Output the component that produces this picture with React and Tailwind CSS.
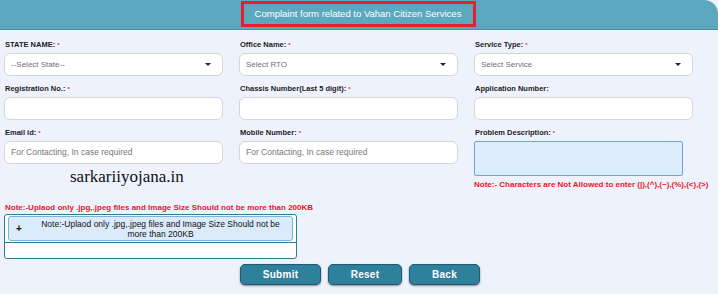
import React from 'react';

const Req = () => <span className="text-[#f0302e] text-[6px] align-top ml-[2px]">*</span>;

const Label = ({ children, req }) => (
  <div className="h-[12px] leading-[12px] text-[7.5px] font-bold text-[#1c1c1c] pl-[1px] mb-[2px]">
    {children}
    {req && <Req />}
  </div>
);

const Select = ({ text }) => (
  <div className="h-[23px] bg-white border border-[#d6d6d6] rounded-[6px] flex items-center justify-between px-[6px]">
    <span className="text-[8px] text-[#6f6f6f]">{text}</span>
    <span className="w-0 h-0 border-l-[3px] border-r-[3px] border-t-[3px] border-l-transparent border-r-transparent border-t-[#222] mr-[5px]" />
  </div>
);

const Input = ({ placeholder }) => (
  <div className="h-[23px] bg-white border border-[#d6d6d6] rounded-[6px] flex items-center px-[6px]">
    <span className="text-[8.5px] text-[#777]">{placeholder}</span>
  </div>
);

const Button = ({ children, w }) => (
  <button className={`${w} h-[21px] rounded-[5px] bg-[#2f809b] border border-[#1d5c70] shadow-[0_1px_2px_rgba(0,0,0,0.45)] text-white text-[10px] font-bold tracking-[0.3px]`}>
    {children}
  </button>
);

export default function App() {
  return (
    <div className="w-[718px] h-[294px] bg-[#eef2fd] overflow-hidden" style={{ fontFamily: '"Liberation Sans", Arial, sans-serif' }}>
      {/* header */}
      <div className="h-[30px] bg-[#5ba7bd] rounded-tr-[14px] border-b border-[#4c90a5] flex justify-center items-start pt-[1px]">
        <div className="ml-[-2px] w-[235px] h-[26px] border-[3px] border-[#e5202b] flex items-center justify-center text-white text-[9.5px]">
          Complaint form related to Vahan Citizen Services
        </div>
      </div>

      <div className="relative px-[4px] pt-[9px]">
        <div className="grid grid-cols-[219px_219px_219px] gap-x-[16px] gap-y-[7px]">
          <div>
            <Label req>STATE NAME:</Label>
            <Select text="--Select State--" />
          </div>
          <div>
            <Label req>Office Name:</Label>
            <Select text="Select RTO" />
          </div>
          <div>
            <Label req>Service Type:</Label>
            <Select text="Select Service" />
          </div>

          <div>
            <Label req>Registration No.:</Label>
            <Input />
          </div>
          <div>
            <Label req>Chassis Number(Last 5 digit):</Label>
            <Input />
          </div>
          <div>
            <Label>Application Number:</Label>
            <Input />
          </div>

          <div>
            <Label req>Email id:</Label>
            <Input placeholder="For Contacting, In case required" />
          </div>
          <div>
            <Label req>Mobile Number:</Label>
            <Input placeholder="For Contacting, In case required" />
          </div>
          <div>
            <Label req>Problem Description:</Label>
            <div className="w-[209px] h-[35px] bg-[#deedfb] border border-[#6ea6d6] rounded-[2px]" />
            <div className="mt-[3px] h-[12px] leading-[12px] text-[8px] font-bold text-[#f0141e] whitespace-nowrap">
              Note:- Characters are Not Allowed to enter (|),(^),(~),(%),(&lt;),(&gt;)
            </div>
          </div>
        </div>

        {/* watermark */}
        <div className="absolute left-[70px] top-[137px] text-[17px] leading-[20px] text-[#111]" style={{ fontFamily: '"Liberation Serif", "Times New Roman", serif' }}>
          sarkariiyojana.in
        </div>

        <div className="mt-[12px] h-[10px] leading-[10px] text-[8px] font-bold text-[#f0141e] pl-[1px] whitespace-nowrap">
          Note:-Uplaod only .jpg,.jpeg files and Image Size Should not be more than 200KB
        </div>

        {/* upload */}
        <div className="mt-[1px] w-[293px] h-[45px] bg-white border border-[#2a7a98] rounded-[3px] flex flex-col">
          <div className="mx-[3px] mt-[1px] h-[25px] bg-[#dcebf9] border border-[#7eb1da] rounded-[3px] flex items-center">
            <span className="w-[20px] text-center text-[10px] font-bold text-[#111]">+</span>
            <span className="flex-1 text-center text-[8.5px] leading-[10px] text-[#111] px-[10px]">
              Note:-Uplaod only .jpg,.jpeg files and Image Size Should not be more than 200KB
            </span>
          </div>
          <div className="mt-[1px] border-t border-[#2a7a98]" />
        </div>

        <div className="mt-[5px] flex justify-center gap-[7px] pl-[2px]">
          <Button w="w-[81px]">Submit</Button>
          <Button w="w-[74px]">Reset</Button>
          <Button w="w-[71px]">Back</Button>
        </div>
      </div>
    </div>
  );
}
